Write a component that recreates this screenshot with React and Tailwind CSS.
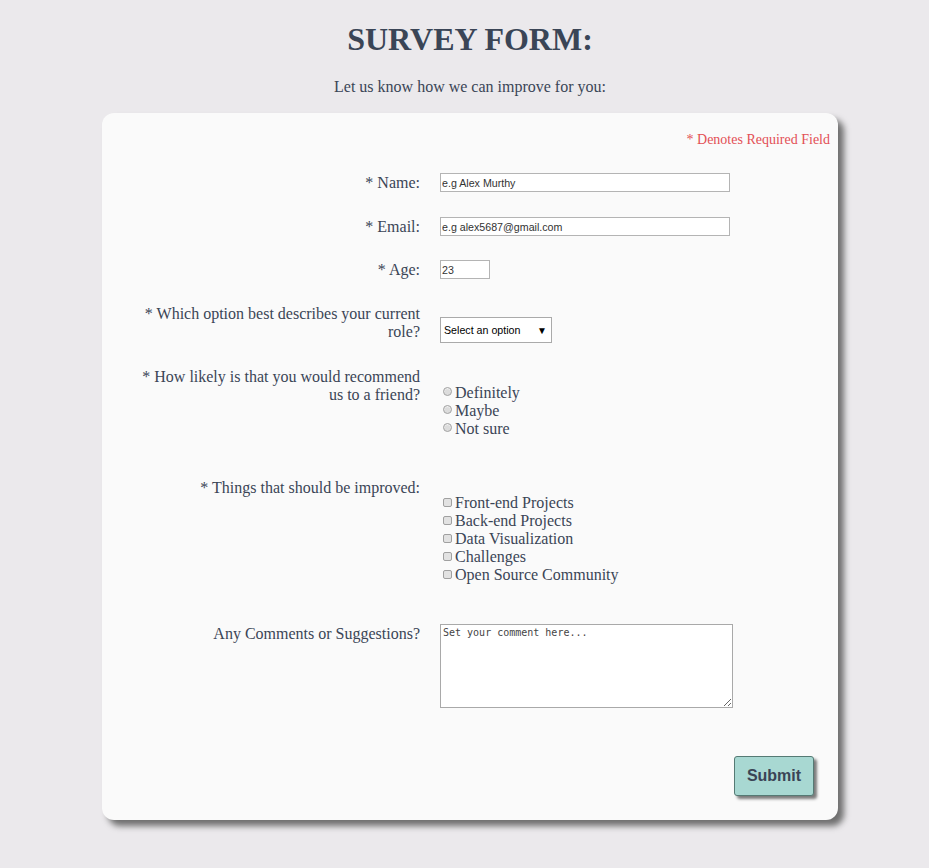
// Survey form page - single card with right-aligned labels and controls

const serif = "font-['Liberation_Serif','Times_New_Roman',serif]"
const sans = "font-['Liberation_Sans',Arial,sans-serif]"

function Label({ children, className = '' }) {
  // fixed-width label column, text aligned to the right edge
  return (
    <div className={`w-[285px] shrink-0 text-right text-[16px] leading-[18px] ${className}`}>
      {children}
    </div>
  )
}

function Radio({ label }) {
  return (
    <label className="flex items-start h-[18px]">
      <span className="mt-[3px] ml-[3px] mr-[3px] w-[9px] h-[9px] rounded-full border border-[#a4a4a4] bg-[#dcdcdc] shadow-[inset_0_1px_1px_#f4f4f4]" />
      <span>{label}</span>
    </label>
  )
}

function Check({ label }) {
  return (
    <label className="flex items-start h-[18px]">
      <span className="mt-[4px] ml-[3px] mr-[3px] w-[9px] h-[9px] rounded-[2px] border border-[#a0a0a0] bg-[#e2e2e2]" />
      <span>{label}</span>
    </label>
  )
}

export default function App() {
  const roles = ['Definitely', 'Maybe', 'Not sure']
  const improvements = [
    'Front-end Projects',
    'Back-end Projects',
    'Data Visualization',
    'Challenges',
    'Open Source Community',
  ]

  const inputCls = `h-[19px] border border-[#b4b4b4] bg-white px-[1px] text-[10.67px] text-[#333] placeholder:text-[#333] outline-none ${sans}`

  return (
    <div className={`min-h-[868px] bg-[#ebe9ec] text-[#3a4556] pl-[11px] pb-[40px] ${serif}`}>
      {/* Header */}
      <h1 className="pt-[21px] text-center text-[32px] leading-[36px] font-bold">SURVEY FORM:</h1>
      <p className="mt-[21px] text-center text-[16px] leading-[18px]">Let us know how we can improve for you:</p>

      {/* Card */}
      <div className="ml-[91px] mt-[17px] w-[736px] rounded-[12px] bg-[#fafafa] shadow-[6px_6px_6px_#6f6f6f] pl-[33px] pr-[24px] pb-[24px]">
        <p className="pt-[19px] -mr-[16px] text-right text-[14px] leading-[16px] text-[#e34f55]">
          * Denotes Required Field
        </p>

        <form className="mt-[25px] flex flex-col text-[16px] leading-[18px]">
          {/* Name */}
          <div className="flex items-start gap-[20px]">
            <Label className="pt-[1px]">* Name:</Label>
            <input className={`${inputCls} w-[290px]`} placeholder="e.g Alex Murthy" />
          </div>

          {/* Email */}
          <div className="mt-[25px] flex items-start gap-[20px]">
            <Label className="pt-[1px]">* Email:</Label>
            <input className={`${inputCls} w-[290px]`} placeholder="e.g alex5687@gmail.com" />
          </div>

          {/* Age */}
          <div className="mt-[24px] flex items-start gap-[20px]">
            <Label className="pt-[1px]">* Age:</Label>
            <input className={`${inputCls} w-[50px]`} placeholder="23" />
          </div>

          {/* Role */}
          <div className="mt-[25px] flex items-start gap-[20px]">
            <Label className="pt-[1px]">* Which option best describes your current role?</Label>
            <div className="relative mt-[13px]">
              <select className={`appearance-none w-[112px] h-[26px] border border-[#aaaaaa] bg-white pl-[3px] text-[10.67px] text-black outline-none ${sans}`}>
                <option>Select an option</option>
                <option>Student</option>
                <option>Full Time Job</option>
                <option>Full Time Learner</option>
                <option>Prefer not to say</option>
                <option>Other</option>
              </select>
              <span className="pointer-events-none absolute right-[5px] top-[5px] text-[10px] text-black">▼</span>
            </div>
          </div>

          {/* Recommend */}
          <div className="mt-[24px] flex items-start gap-[20px]">
            <Label className="pt-[1px]">* How likely is that you would recommend us to a friend?</Label>
            <div className="mt-[17px] flex flex-col">
              {roles.map((r) => (
                <Radio key={r} label={r} />
              ))}
            </div>
          </div>

          {/* Improvements */}
          <div className="mt-[40px] flex items-start gap-[20px]">
            <Label className="pt-[1px]">* Things that should be improved:</Label>
            <div className="mt-[16px] flex flex-col">
              {improvements.map((i) => (
                <Check key={i} label={i} />
              ))}
            </div>
          </div>

          {/* Comments */}
          <div className="mt-[39px] flex items-start gap-[20px]">
            <Label className="pt-[2px]">Any Comments or Suggestions?</Label>
            <textarea
              className="mt-[1px] w-[293px] h-[84px] border border-[#a9a9a9] bg-white px-[2px] py-[1px] text-[10px] leading-[13px] text-[#444] placeholder:text-[#444] font-['DejaVu_Sans_Mono',monospace] outline-none"
              placeholder="Set your comment here..."
            />
          </div>

          {/* Submit */}
          <div className="mt-[48px] flex justify-end">
            <button
              type="button"
              className={`w-[80px] h-[40px] rounded-[3px] border border-[#557a74] bg-[#a8d8d2] text-[16px] font-bold text-[#3a4556] shadow-[3px_3px_3px_#7a7a7a] ${sans}`}
            >
              Submit
            </button>
          </div>
        </form>
      </div>
    </div>
  )
}
